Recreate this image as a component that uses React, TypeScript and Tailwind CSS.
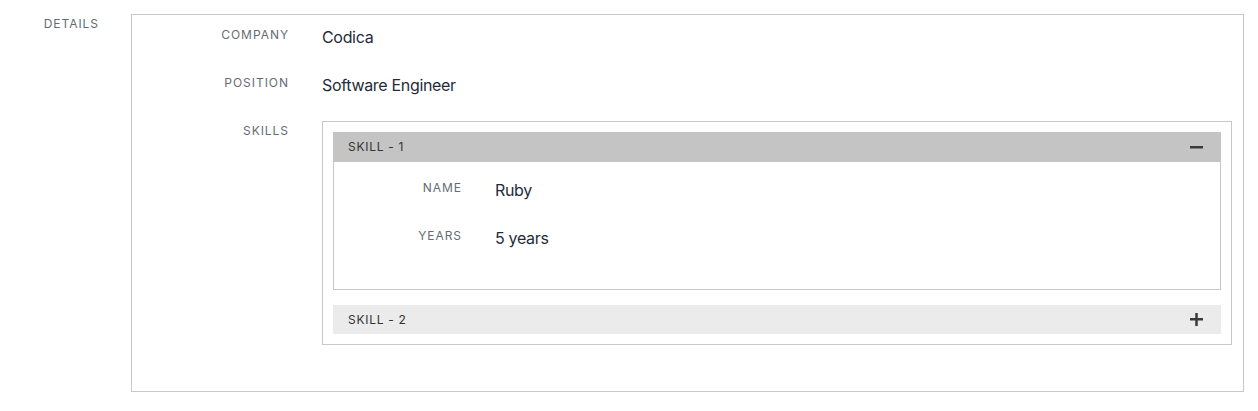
const details = [
  { label: "Company", value: "Codica" },
  { label: "Position", value: "Software Engineer" },
];

const skill = [
  { label: "Name", value: "Ruby" },
  { label: "Years", value: "5 years" },
];

function Label({ children, width }: { children: string; width: string }) {
  return (
    <div
      className={`${width} shrink-0 pt-[2px] text-right text-xs leading-4 uppercase tracking-[0.08em] text-[#656b75]`}
    >
      {children}
    </div>
  );
}

function Value({ children }: { children: string }) {
  return (
    <div className="text-base leading-6 tracking-[-0.02em] text-[#1f2b3b]">
      {children}
    </div>
  );
}

function MinusIcon() {
  return (
    <svg width="13" height="13" viewBox="0 0 13 13" className="text-[#3a3a3a]">
      <rect x="0" y="5" width="13" height="2.5" fill="currentColor" />
    </svg>
  );
}

function PlusIcon() {
  return (
    <svg width="13" height="13" viewBox="0 0 13 13" className="text-[#3a3a3a]">
      <rect x="0" y="5" width="13" height="2.5" fill="currentColor" />
      <rect x="5.25" y="0" width="2.5" height="13" fill="currentColor" />
    </svg>
  );
}

export default function App() {
  return (
    <div
      className="h-[411px] w-[1258px] bg-white"
      style={{ fontFamily: "Inter, 'Noto Sans', sans-serif" }}
    >
      <div className="flex pt-[14px]">
        <div className="w-[131px] shrink-0 pr-[32px] pt-[2px] text-right text-xs leading-4 uppercase tracking-[0.08em] text-[#656b75]">
          Details
        </div>

        <div className="flex w-[1113px] flex-col gap-6 border border-[#c8c8c8] pb-[46px] pt-[10px]">
          {details.map((row) => (
            <div key={row.label} className="flex gap-[33px]">
              <Label width="w-[157px]">{row.label}</Label>
              <Value>{row.value}</Value>
            </div>
          ))}

          <div className="flex gap-[33px] pr-[11px]">
            <Label width="w-[157px]">Skills</Label>
            <div className="flex flex-1 flex-col border border-[#c8c8c8] p-[10px]">
              <div className="flex h-[30px] items-center justify-between bg-[#c4c4c4] pl-[15px] pr-[18px]">
                <span className="text-xs tracking-[0.06em] text-[#333]">SKILL - 1</span>
                <MinusIcon />
              </div>
              <div className="flex flex-col gap-6 border border-t-0 border-[#c8c8c8] pb-[39px] pt-[16px]">
                {skill.map((row) => (
                  <div key={row.label} className="flex gap-[33px]">
                    <Label width="w-[128px]">{row.label}</Label>
                    <Value>{row.value}</Value>
                  </div>
                ))}
              </div>
              <div className="mt-[15px] flex h-[29px] items-center justify-between bg-[#ebebeb] pl-[15px] pr-[18px]">
                <span className="text-xs tracking-[0.06em] text-[#333]">SKILL - 2</span>
                <PlusIcon />
              </div>
            </div>
          </div>
        </div>
      </div>
    </div>
  );
}
